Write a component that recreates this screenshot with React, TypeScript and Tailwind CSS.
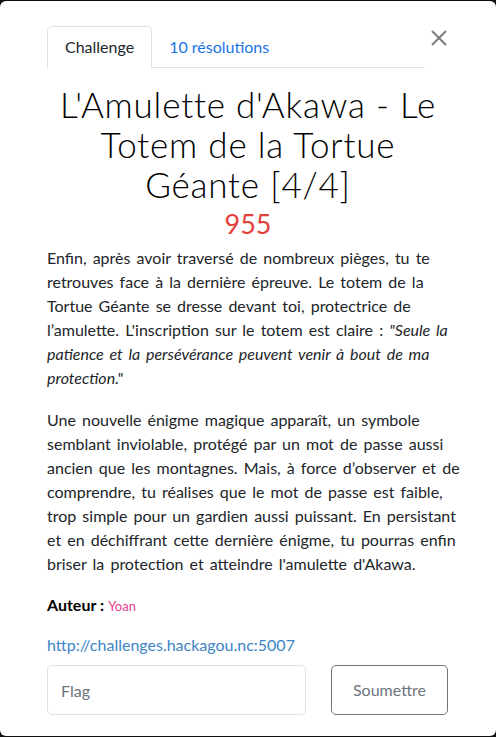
export default function App() {
  return (
    <div className="h-screen bg-[#101010] py-px font-['Lato','Liberation_Sans',sans-serif]">
      <div className="flex h-full flex-col rounded-[6px] bg-white px-[47px] pt-[25px]">
        {/* tabs + close */}
        <div className="relative flex">
          <div className="flex w-[378px] border-b border-[#dee2e6]">
            <div className="-mb-px flex h-[42px] items-center rounded-t-[5px] border border-[#dee2e6] border-b-white bg-white px-[17px] text-[16px] text-[#212529]">
              Challenge
            </div>
            <div className="flex h-[41px] items-center px-[17px] text-[16px] text-[#1a73e8]">
              10 résolutions
            </div>
          </div>
          <button className="absolute right-[2px] top-[4px] flex h-[16px] w-[16px] items-center justify-center">
            <svg width="16" height="16" viewBox="0 0 16 16" fill="none">
              <path d="M1 1L15 15M15 1L1 15" stroke="#7d7d7d" strokeWidth="2" />
            </svg>
          </button>
        </div>

        {/* title */}
        <h2 className="mt-[16px] text-center text-[35px] font-light leading-[40px] tracking-[0.8px] text-black">
          L'Amulette d'Akawa - Le Totem de la Tortue Géante [4/4]
        </h2>
        <div className="mt-[4px] text-center text-[27px] leading-[32px] text-[#e3403a]">955</div>

        {/* description */}
        <div className="mt-[6px] whitespace-nowrap text-[16px] leading-[24px] text-[#212529] [word-spacing:2px]">
          <p>
            Enfin, après avoir traversé de nombreux pièges, tu te
            <br />
            retrouves face à la dernière épreuve. Le totem de la
            <br />
            Tortue Géante se dresse devant toi, protectrice de
            <br />
            l’amulette. L'inscription sur le totem est claire : <em>"Seule la</em>
            <br />
            <em>patience et la persévérance peuvent venir à bout de ma</em>
            <br />
            <em>protection."</em>
          </p>
          <p className="mt-[18px]">
            Une nouvelle énigme magique apparaît, un symbole
            <br />
            semblant inviolable, protégé par un mot de passe aussi
            <br />
            ancien que les montagnes. Mais, à force d’observer et de
            <br />
            comprendre, tu réalises que le mot de passe est faible,
            <br />
            trop simple pour un gardien aussi puissant. En persistant
            <br />
            et en déchiffrant cette dernière énigme, tu pourras enfin
            <br />
            briser la protection et atteindre l'amulette d'Akawa.
          </p>
          <p className="mt-[17px] [word-spacing:0px]">
            <strong className="font-bold text-black">Auteur :</strong>{" "}
            <span className="text-[13px] text-[#e83e8c]">Yoan</span>
          </p>
          <p className="mt-[15px]">
            <a className="text-[#3d85c6]">http://challenges.hackagou.nc:5007</a>
          </p>
        </div>

        {/* flag form */}
        <div className="mt-[8px] flex gap-[25px]">
          <input
            placeholder="Flag"
            className="h-[50px] w-[259px] rounded-[5px] border border-[#dee2e6] px-[13px] text-[16px] text-[#495057] outline-none placeholder:text-[#6c757d]"
          />
          <button className="h-[50px] w-[117px] rounded-[5px] border border-[#6c757d] text-[16px] text-[#6c757d]">
            Soumettre
          </button>
        </div>
      </div>
    </div>
  );
}
